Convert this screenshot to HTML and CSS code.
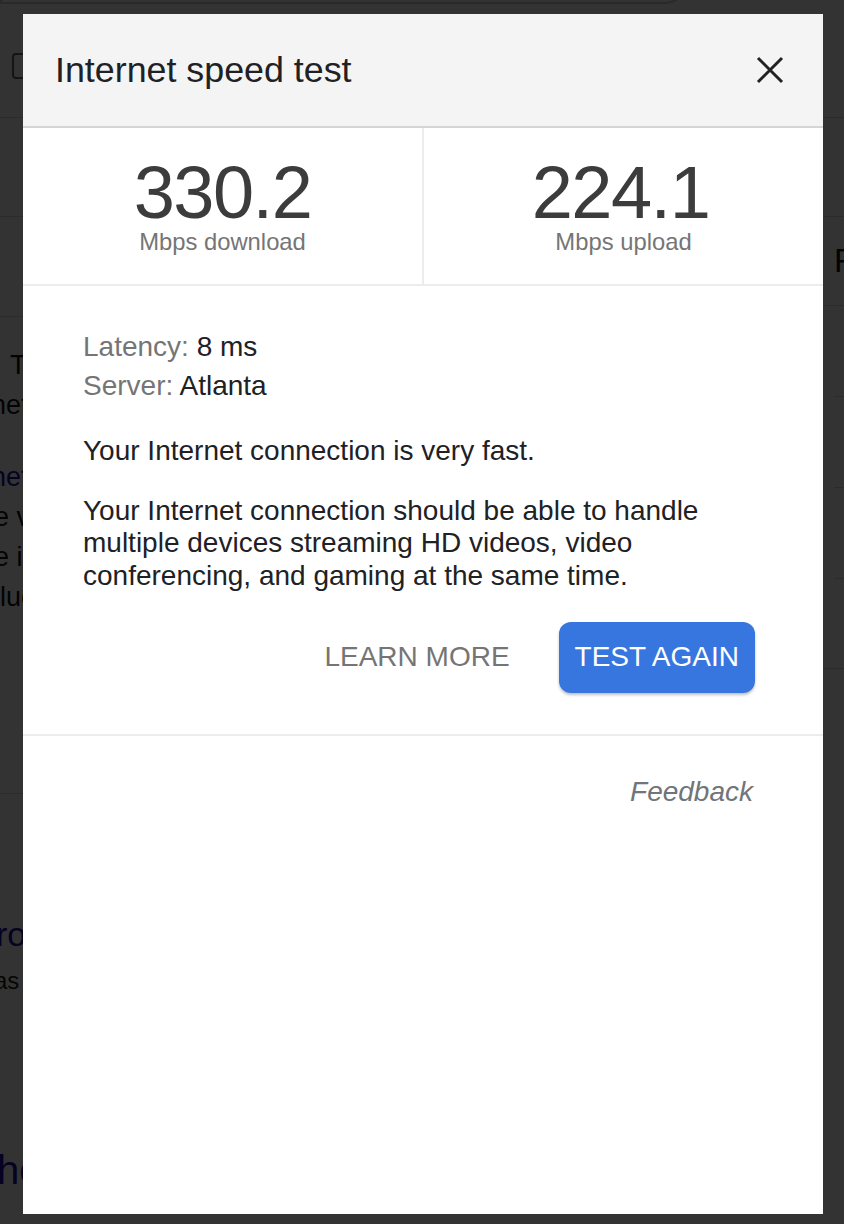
FILE: index.html
```html
<!DOCTYPE html>
<html lang="en">
<head>
<meta charset="utf-8">
<title>Internet speed test</title>
<link rel="stylesheet" href="styles.css">
</head>
<body>
<div class="page" aria-hidden="true">
  <div class="bg-head">
    <div class="bg-search"></div>
    <div class="bg-tabs"><span class="bg-tab-icon"></span></div>
  </div>
  <div class="bg-bar"></div>
  <div class="bg-cols">
    <div class="bg-main">
      <div class="bg-block"></div>
      <div class="bg-text">
        <div class="bg-line first">Th</div>
        <div class="bg-line shift2">net</div>
      </div>
      <div class="bg-text gap">
        <div class="bg-line link shift2">net</div>
        <div class="bg-line shift6">e v</div>
        <div class="bg-line shift6">e in</div>
        <div class="bg-line">luc</div>
      </div>
      <div class="bg-spacer"></div>
      <div class="bg-heading link">ro</div>
      <div class="bg-small">as</div>
      <div class="bg-bigger link">he</div>
    </div>
    <div class="bg-side">
      <div class="bg-side-head"><span class="bg-side-letter">F</span></div>
      <div class="bg-item"></div>
      <div class="bg-item"></div>
      <div class="bg-item"></div>
      <div class="bg-item full"></div>
    </div>
  </div>
</div>
<div class="overlay"></div>

<div class="modal" role="dialog" aria-label="Internet speed test">
  <div class="modal-header">
    <h1 class="modal-title">Internet speed test</h1>
    <svg class="close" width="28" height="28" viewBox="0 0 28 28" aria-label="Close">
      <path d="M2 2 L26 26 M26 2 L2 26" stroke="#222" stroke-width="3" fill="none"/>
    </svg>
  </div>
  <div class="stats">
    <div class="stat">
      <div class="num">330.2</div>
      <div class="unit">Mbps download</div>
    </div>
    <div class="stat">
      <div class="num">224.1</div>
      <div class="unit">Mbps upload</div>
    </div>
  </div>
  <div class="modal-body">
    <div class="info"><span class="label">Latency:</span> 8 ms</div>
    <div class="info"><span class="label">Server:</span> Atlanta</div>
    <p class="msg first-msg">Your Internet connection is very fast.</p>
    <p class="msg">Your Internet connection should be able to handle multiple devices streaming HD videos, video conferencing, and gaming at the same time.</p>
    <div class="actions">
      <button class="btn btn-text">LEARN MORE</button>
      <button class="btn btn-primary">TEST AGAIN</button>
    </div>
  </div>
  <div class="modal-footer">
    <span class="feedback">Feedback</span>
  </div>
</div>
</body>
</html>
```
FILE: styles.css
```css
html, body {
  margin: 0;
  padding: 0;
  overflow: hidden;
  height: 100%;
}
body {
  font-family: "Liberation Sans", Arial, Helvetica, sans-serif;
  background: #fff;
  color: #202124;
}

/* ---------- underlying page (dimmed) ---------- */
.page {
  width: 844px;
  background: #fff;
}
.bg-head {
  height: 117px;
  border-bottom: 1px solid #d4d6da;
  overflow: hidden;
}
.bg-search {
  width: 690px;
  height: 44px;
  margin-top: -44px;
  border: 2px solid #c9ccd1;
  border-radius: 0 0 26px 0;
  box-sizing: border-box;
  transform: translateY(4px);
}
.bg-tabs {
  padding: 53px 0 0 12px;
}
.bg-tab-icon {
  display: block;
  width: 22px;
  height: 26px;
  border: 2px solid #5f6368;
  border-radius: 4px;
  box-sizing: border-box;
}
.bg-bar {
  height: 98px;
  border-bottom: 1px solid #d4d6da;
}
.bg-cols {
  display: flex;
  justify-content: space-between;
}
.bg-main {
  width: 400px;
}
.bg-block {
  height: 99px;
  border-bottom: 1px solid #d4d6da;
}
.bg-text {
  width: 23px;
  padding-top: 28px;
  font-size: 27px;
  line-height: 40px;
  white-space: nowrap;
  overflow: hidden;
  color: #111;
}
.bg-text.gap {
  padding-top: 32px;
}
.bg-line.first {
  padding-left: 10px;
}
.bg-line.shift2 {
  text-indent: -9px;
}
.bg-line.shift6 {
  text-indent: -6px;
}
.link {
  color: #1a0dab;
}
.bg-spacer {
  height: 176px;
  border-bottom: 1px solid #d4d6da;
}
.bg-heading,
.bg-small,
.bg-bigger {
  width: 23px;
  overflow: hidden;
  white-space: nowrap;
}
.bg-heading {
  margin-top: 120px;
  font-size: 34px;
  line-height: 40px;
  text-indent: -4px;
}
.bg-small {
  margin-top: 12px;
  font-size: 24px;
  line-height: 30px;
  text-indent: -6px;
  color: #222;
}
.bg-bigger {
  margin-top: 150px;
  font-size: 40px;
  line-height: 48px;
  text-indent: -3px;
}
.bg-side {
  width: 420px;
}
.bg-side-head {
  height: 88px;
  line-height: 88px;
  font-size: 33px;
  padding-left: 410px;
  border-bottom: 1px solid #d4d6da;
  color: #111;
  overflow: hidden;
}
.bg-item {
  height: 90px;
  margin-left: 410px;
  border-bottom: 1px solid #d4d6da;
}
.bg-item.full {
  margin-left: 0;
  height: 89px;
}

/* ---------- overlay ---------- */
.overlay {
  position: fixed;
  inset: 0;
  background: rgba(0, 0, 0, 0.8);
}

/* ---------- modal ---------- */
.modal {
  position: fixed;
  left: 23px;
  top: 14px;
  width: 800px;
  height: 1200px;
  background: #fff;
  display: flex;
  flex-direction: column;
}
.modal-header {
  height: 112px;
  background: #f4f4f4;
  border-bottom: 2px solid #d5d5d5;
  display: flex;
  align-items: center;
  justify-content: space-between;
  padding: 0 39px 0 32px;
  flex: none;
}
.modal-title {
  margin: 0;
  font-size: 35.8px;
  font-weight: 400;
  color: #202124;
  line-height: 40px;
}
.close {
  display: block;
  flex: none;
}

.stats {
  display: flex;
  border-bottom: 2px solid #ececec;
  flex: none;
}
.stat {
  flex: 1;
  text-align: center;
  padding: 30px 0 28px;
}
.stat + .stat {
  border-left: 2px solid #ececec;
}
.num {
  font-size: 74px;
  line-height: 70px;
  letter-spacing: -1.5px;
  color: #3c3c3c;
}
.stat + .stat .num {
  margin-right: 6px;
}
.unit {
  font-size: 23.8px;
  line-height: 28px;
  color: #757575;
}

.modal-body {
  padding: 41px 68px 41px 60px;
  border-bottom: 2px solid #ececec;
  font-size: 28px;
  color: #202124;
  flex: none;
}
.info {
  line-height: 39px;
}
.label {
  color: #757575;
}
.msg {
  margin: 27px 0 0;
  line-height: 32.5px;
}
.msg.first-msg {
  margin-top: 30px;
}
.actions {
  margin-top: 29.5px;
  display: flex;
  justify-content: flex-end;
  align-items: center;
  gap: 33px;
}
.btn {
  font-family: inherit;
  font-size: 28px;
  height: 71px;
  padding: 0 16px;
  border: none;
  border-radius: 12px;
  background: transparent;
  cursor: pointer;
}
.btn-text {
  color: #757575;
}
.btn-primary {
  background: #3876df;
  color: #fff;
  box-shadow: 0 2px 3px rgba(0, 0, 0, 0.25);
}

.modal-footer {
  padding: 40px 70px 0 60px;
  display: flex;
  justify-content: flex-end;
}
.feedback {
  font-size: 28px;
  line-height: 32px;
  font-style: italic;
  color: #70757a;
}
```
